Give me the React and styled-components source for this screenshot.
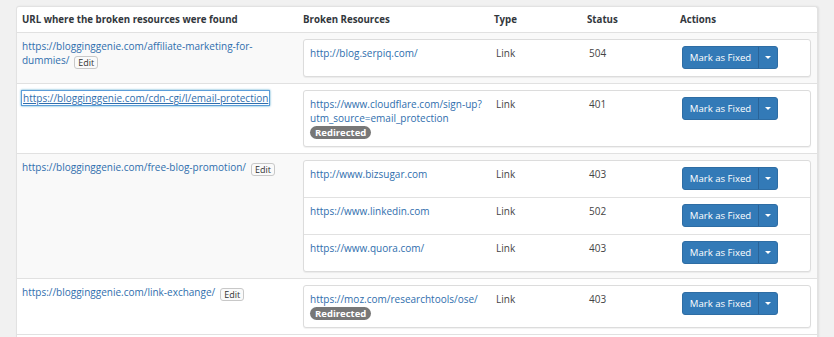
import React from 'react';
import styled, { createGlobalStyle } from 'styled-components';

const GlobalStyle = createGlobalStyle`
  html, body {
    margin: 0;
    padding: 0;
    background: #f1f1f1;
    font-family: "Open Sans", "Noto Sans", sans-serif;
  }
`;

const rows = [
  {
    page: 'https://blogginggenie.com/affiliate-marketing-for-dummies/',
    striped: true,
    links: [{ url: 'http://blog.serpiq.com/', status: '504' }],
  },
  {
    page: 'https://blogginggenie.com/cdn-cgi/l/email-protection',
    focused: true,
    links: [
      {
        url: 'https://www.cloudflare.com/sign-up?utm_source=email_protection',
        status: '401',
        redirected: true,
      },
    ],
  },
  {
    page: 'https://blogginggenie.com/free-blog-promotion/',
    striped: true,
    links: [
      { url: 'http://www.bizsugar.com', status: '403' },
      { url: 'https://www.linkedin.com', status: '502' },
      { url: 'https://www.quora.com/', status: '403' },
    ],
  },
  {
    page: 'https://blogginggenie.com/link-exchange/',
    links: [
      { url: 'https://moz.com/researchtools/ose/', status: '403', redirected: true },
    ],
  },
];

function BrokenLinks() {
  return (
    <Panel>
      <HeadRow>
        <HeadCell first>URL where the broken resources were found</HeadCell>
        <HeadCell>Broken Resources</HeadCell>
        <HeadCell>Type</HeadCell>
        <HeadCell>Status</HeadCell>
        <HeadCell>Actions</HeadCell>
      </HeadRow>
      {rows.map((row) => (
        <Row key={row.page} striped={row.striped}>
          <PageCell>
            {row.focused ? (
              <FocusLink href="#">{row.page}</FocusLink>
            ) : (
              <>
                <PageLink href="#">{row.page}</PageLink>
                <EditButton>Edit</EditButton>
              </>
            )}
          </PageCell>
          <Card>
            {row.links.map((link) => (
              <CardRow key={link.url}>
                <UrlCell>
                  <ResourceLink href="#">{link.url}</ResourceLink>
                  {link.redirected && <Badge>Redirected</Badge>}
                </UrlCell>
                <PlainCell>Link</PlainCell>
                <PlainCell>{link.status}</PlainCell>
                <ActionCell>
                  <SplitButton>
                    <MainPart>Mark as Fixed</MainPart>
                    <CaretPart>
                      <Caret />
                    </CaretPart>
                  </SplitButton>
                </ActionCell>
              </CardRow>
            ))}
          </Card>
        </Row>
      ))}
    </Panel>
  );
}

export default function App() {
  return (
    <>
      <GlobalStyle />
      <Page>
        <BrokenLinks />
      </Page>
    </>
  );
}

const Page = styled.div`
  padding: 6px 16px 0 16px;
  width: 802px;
`;

const Panel = styled.div`
  background: #fff;
  border: 1px solid #e2e2e2;
  border-bottom: none;
  border-radius: 3px 3px 0 0;
  padding-bottom: 3px;
  box-shadow: 1px 0 2px rgba(0, 0, 0, 0.08);
`;

const HeadRow = styled.div`
  display: grid;
  grid-template-columns: 286px 191px 93px 93px 1fr;
  height: 25px;
  align-items: center;
  border-bottom: 1px solid #e1e1e1;
`;

const HeadCell = styled.div`
  padding-left: ${(p) => (p.first ? '5px' : '0')};
  font-size: 9.7px;
  font-weight: 700;
  color: #32373c;
  white-space: nowrap;
`;

const Row = styled.div`
  display: grid;
  grid-template-columns: 286px 1fr;
  padding: 6px 6px 6px 0;
  background: ${(p) => (p.striped ? '#f9f9f9' : '#fff')};
  border-bottom: 1px solid #e1e1e1;
`;

const PageCell = styled.div`
  padding: 0 24px 0 5px;
  font-size: 10px;
  line-height: 14px;
`;

const PageLink = styled.a`
  color: #2f6ead;
  text-decoration: none;
  margin-right: 5px;
`;

const FocusLink = styled.a`
  display: inline-block;
  color: #2f6ead;
  text-decoration: underline;
  line-height: 14px;
  margin-left: -1px;
  padding: 0 1px;
  border: 1px solid #5b9dd9;
  box-shadow: 0 0 2px rgba(30, 140, 190, 0.8);
`;

const EditButton = styled.span`
  display: inline-block;
  height: 11px;
  line-height: 11px;
  padding: 0 3px;
  font-size: 9px;
  color: #333;
  background: #fafafa;
  border: 1px solid #c8c8c8;
  border-radius: 3px;
  vertical-align: -2px;
`;

const Card = styled.div`
  background: #fff;
  border: 1px solid #dcdcdc;
  border-radius: 3px;
  box-shadow: 0 1px 1px rgba(0, 0, 0, 0.06);
`;

const CardRow = styled.div`
  display: grid;
  grid-template-columns: 186px 93px 93px 1fr;
  padding: 6px 0 7px 6px;
  & + & {
    border-top: 1px solid #e1e1e1;
  }
`;

const UrlCell = styled.div`
  padding-right: 12px;
  font-size: 10px;
  line-height: 14px;
  word-break: break-all;
`;

const ResourceLink = styled.a`
  display: block;
  color: #2f6ead;
  text-decoration: none;
`;

const Badge = styled.span`
  display: inline-block;
  height: 13px;
  line-height: 13px;
  padding: 0 5px;
  border-radius: 7px;
  background: #777;
  color: #fff;
  font-size: 9.5px;
  font-weight: 700;
`;

const PlainCell = styled.div`
  font-size: 10px;
  line-height: 14px;
  color: #444;
`;

const ActionCell = styled.div`
  display: flex;
`;

const SplitButton = styled.div`
  display: flex;
  height: 23px;
  border-radius: 3px;
  overflow: hidden;
  background: #337ab7;
  border: 1px solid #2e6da4;
  box-sizing: border-box;
`;

const MainPart = styled.div`
  display: flex;
  align-items: center;
  justify-content: center;
  width: 75px;
  box-sizing: border-box;
  color: #fff;
  font-size: 9.6px;
  white-space: nowrap;
`;

const CaretPart = styled.div`
  display: flex;
  align-items: center;
  justify-content: center;
  width: 18px;
  border-left: 1px solid #2a6398;
`;

const Caret = styled.span`
  width: 0;
  height: 0;
  border-left: 3px solid transparent;
  border-right: 3px solid transparent;
  border-top: 3px solid #fff;
`;
